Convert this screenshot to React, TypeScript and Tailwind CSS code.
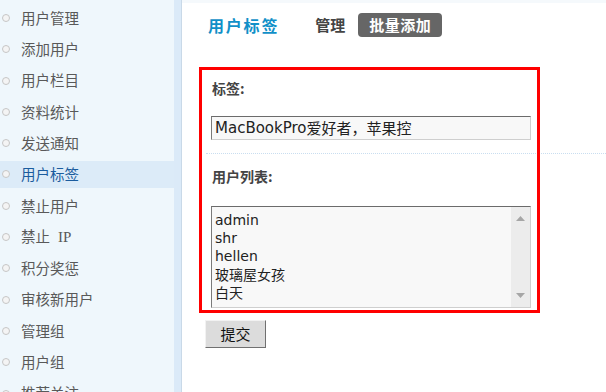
import React from 'react';

const menu = [
  '用户管理',
  '添加用户',
  '用户栏目',
  '资料统计',
  '发送通知',
  '用户标签',
  '禁止用户',
  '禁止 IP',
  '积分奖惩',
  '审核新用户',
  '管理组',
  '用户组',
  '推荐关注',
];

const users = ['admin', 'shr', 'hellen', '玻璃屋女孩', '白天'];

const cjk = "font-['Noto_Sans_CJK_SC',sans-serif]";

const SideItem: React.FC<{ label: string; active: boolean }> = ({ label, active }) => {
  const isIp = label === '禁止 IP';
  return (
    <div
      className={`flex items-center h-[27px] shrink-0 ${active ? 'bg-[#dcebf8] text-[#1b5c9e]' : 'text-[#595959]'}`}
    >
      <span className="ml-[2px] w-[8px] h-[8px] rounded-full border border-[#c6c6c6] bg-[#f4f4f4] shrink-0" />
      <span className="ml-[11px] text-[14.5px] leading-none">
        {isIp ? (
          <>
            禁止<span className="font-['Liberation_Serif',serif] ml-[8px] text-[15px]">IP</span>
          </>
        ) : (
          label
        )}
      </span>
    </div>
  );
};

const App: React.FC = () => {
  return (
    <div className={`w-[606px] h-[392px] overflow-hidden flex bg-white ${cjk}`}>
      {/* sidebar */}
      <div className="w-[174px] shrink-0 bg-[#eff7fc] flex flex-col gap-[4.3px] pt-[4.5px]">
        {menu.map((m) => (
          <SideItem key={m} label={m} active={m === '用户标签'} />
        ))}
      </div>
      <div className="w-[7px] shrink-0 bg-[#dbeaf8]" />
      <div className="w-[1px] shrink-0 bg-[#c9d9e8]" />

      {/* main */}
      <div className="flex-1 flex flex-col relative">
        <div className="h-[3px] bg-[#f5f9fc]" />
        <div className="h-[43px] flex items-center pl-[26px]">
          <span className="text-[16px] tracking-[1.8px] font-bold text-[#1190c8] leading-none">用户标签</span>
          <span className="ml-[36px] text-[15px] font-bold text-[#444] leading-none">管理</span>
          <span className="ml-[13px] h-[24px] px-[11px] flex items-center rounded-[4px] bg-[#666] text-white text-[15px] font-bold leading-none tracking-[0.5px]">
            批量添加
          </span>
        </div>

        <div className="pl-[24px] flex flex-col">
          <div className="pt-[32px] pb-[13px] border-b border-dotted border-[#c9def0]">
            <div className="h-[20px] flex items-center ml-[6px] text-[14px] font-bold text-[#444]">标签:</div>
            <div className="mt-[18px] ml-[5px] w-[320px] h-[24px] bg-[#f8f8f8] border-t border-l border-t-[#6b6b6b] border-l-[#7a7a7a] border-r border-b border-r-[#cfcfcf] border-b-[#cfcfcf] flex items-center pl-[3px] text-[15px] text-[#222]">
              <span className="font-['DejaVu_Sans',sans-serif]">MacBookPro</span>
              <span>爱好者，苹果控</span>
            </div>
          </div>

          <div className="pt-[12px]">
            <div className="h-[20px] flex items-center ml-[6px] text-[14px] font-bold text-[#444]">用户列表:</div>
            <div className="mt-[20px] ml-[5px] w-[320px] h-[102px] bg-[#f8f8f8] border-t border-l border-t-[#6b6b6b] border-l-[#7a7a7a] border-r border-b border-r-[#cfcfcf] border-b-[#cfcfcf] flex">
              <div className="flex-1 pl-[3px] pt-[4px] text-[#222]">
                {users.map((u) => (
                  <div
                    key={u}
                    className={`h-[18px] flex items-center leading-none text-[14px] ${
                      /^[a-z]/.test(u) ? "font-['DejaVu_Sans',sans-serif]" : ''
                    }`}
                  >
                    {u}
                  </div>
                ))}
              </div>
              <div className="w-[19px] bg-[#ececec] flex flex-col items-center justify-between py-[9px]">
                <svg width="9" height="5" viewBox="0 0 9 5">
                  <path d="M0 5 L4.5 0 L9 5 Z" fill="#a6a6a6" />
                </svg>
                <svg width="9" height="5" viewBox="0 0 9 5">
                  <path d="M0 0 L4.5 5 L9 0 Z" fill="#a6a6a6" />
                </svg>
              </div>
            </div>
          </div>

          <button className="mt-[12px] -ml-[1px] w-[61px] h-[28px] bg-[#dcdcdc] border border-t-[#f2f2f2] border-l-[#f2f2f2] border-r-[#707070] border-b-[#707070] text-[15px] text-[#111] flex items-center justify-center">
            提交
          </button>
        </div>

        {/* annotation box */}
        <div className="absolute left-[17px] top-[67px] w-[341px] h-[246px] border-[3px] border-[#ff0000] pointer-events-none" />
      </div>
    </div>
  );
};

export default App;
